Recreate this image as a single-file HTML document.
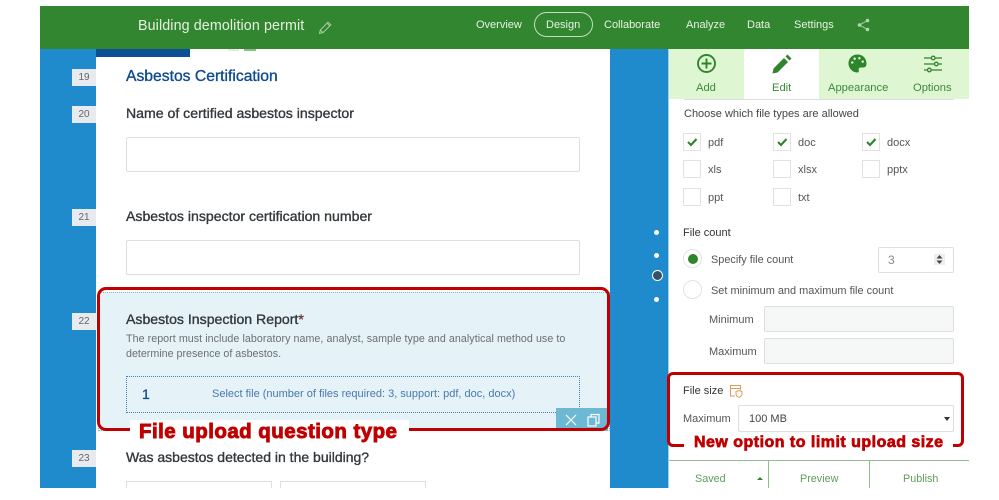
<!DOCTYPE html>
<html><head><meta charset="utf-8"><style>
html,body{margin:0;padding:0;background:#fff;width:999px;height:500px;overflow:hidden}
body{font-family:"Liberation Sans",sans-serif;position:relative}
#w{position:absolute;left:0;top:0;width:999px;height:500px;filter:blur(.3px)}
.a{position:absolute}
.t{position:absolute;white-space:nowrap;line-height:1}
.n{position:absolute;left:72px;width:24px;height:17px;background:#e7eaee;color:#666;font-size:10px;line-height:17px;text-align:center}
.q{font-size:14.1px;color:#33383c;font-weight:400;-webkit-text-stroke:.35px #33383c}
.ib{position:absolute;background:#fff;border:1px solid #dedede;box-sizing:border-box;border-radius:2px}
.nav{color:#e8f2e4;font-size:11px}
.cb{position:absolute;width:18px;height:18px;border:1px solid #e2e2e2;box-sizing:border-box;background:#fff}
.l{color:#555;font-size:11px}
.tab{color:#3a8a3a;font-size:11.2px}
.red{color:#c00000;font-weight:700;-webkit-text-stroke:.9px #c00000}
</style></head><body><div id="w">
<div class="a" style="left:40px;top:49px;width:629px;height:439px;background:#1f8bcd"></div>
<div class="a" style="left:96px;top:49px;width:514px;height:439px;background:#fff"></div>
<div class="a" style="left:96px;top:49px;width:94px;height:8px;background:#0b4f95"></div>
<div class="a" style="left:228px;top:49px;width:11px;height:2px;background:#e8e8e8"></div>
<div class="a" style="left:244px;top:49px;width:12px;height:2px;background:#8dbb8d"></div>
<div class="a" style="left:40px;top:6px;width:929px;height:43px;background:#31862f"></div>

<div class="t" style="left:138px;top:19px;font-size:14.3px;color:#e6f1e2;letter-spacing:.1px">Building demolition permit</div>
<svg class="a" style="left:318px;top:20px" width="14" height="15" viewBox="0 0 14 15" fill="none" stroke="#a9cda6" stroke-width="1"><path d="M1.500 13.500l.8-3.500L10 2.200l2.800 2.700-7.700 7.700zM2.300 10l3 3M9 3.200l2.800 2.700"/></svg>
<div class="t nav" style="left:476px;top:20px">Overview</div>
<div class="a" style="left:534px;top:12px;width:59px;height:25px;border:1px solid #c5dcc2;border-radius:13px;box-sizing:border-box"></div>
<div class="t nav" style="left:546px;top:20px">Design</div>
<div class="t nav" style="left:604px;top:20px">Collaborate</div>
<div class="t nav" style="left:686px;top:20px">Analyze</div>
<div class="t nav" style="left:747px;top:20px">Data</div>
<div class="t nav" style="left:794px;top:20px">Settings</div>
<svg class="a" style="left:857px;top:18px" width="13" height="14" viewBox="0 0 13 14" fill="#b5d4b2" stroke="#b5d4b2"><path d="M10.500 2.500L2.500 7l8 4.500" fill="none"/><circle cx="10.500" cy="2.500" r="1.300"/><circle cx="2.500" cy="7" r="1.300"/><circle cx="10.500" cy="11.500" r="1.300"/></svg>

<div class="n" style="top:69px">19</div>
<div class="n" style="top:106px">20</div>
<div class="n" style="top:209px">21</div>
<div class="n" style="top:313px">22</div>
<div class="n" style="top:450px">23</div>

<div class="t" style="left:126px;top:69px;font-size:15.7px;color:#0e4a8f;-webkit-text-stroke:.35px #0e4a8f">Asbestos Certification</div>
<div class="t q" style="left:126px;top:106px">Name of certified asbestos inspector</div>
<div class="ib" style="left:126px;top:137px;width:454px;height:35px"></div>
<div class="t q" style="left:126px;top:209px">Asbestos inspector certification number</div>
<div class="ib" style="left:126px;top:240px;width:454px;height:35px"></div>

<div class="a" style="left:98px;top:292px;width:512px;height:139px;background:#e5f3f8;border:1px dotted #7fbcd6;box-sizing:border-box"></div>
<div class="t q" style="left:126px;top:312px">Asbestos Inspection Report<span style="color:#c0392b">*</span></div>
<div class="t" style="left:126px;top:334px;font-size:10.7px;color:#6b6f72;letter-spacing:.05px">The report must include laboratory name, analyst, sample type and analytical method use to</div>
<div class="t" style="left:126px;top:349px;font-size:10.7px;color:#6b6f72">determine presence of asbestos.</div>
<div class="a" style="left:126px;top:376px;width:454px;height:37px;border:1px dotted #4a7fb5;box-sizing:border-box"></div>
<div class="t" style="left:142px;top:387px;font-size:14px;color:#0e4a8f;-webkit-text-stroke:.3px #0e4a8f">1</div>
<div class="t" style="left:212px;top:389px;font-size:11px;color:#4a78ad">Select file (number of files required: 3, support: pdf, doc, docx)</div>
<div class="a" style="left:556px;top:408px;width:52px;height:23px;background:#6db8d2"></div>
<svg class="a" style="left:564px;top:413px" width="40" height="14" viewBox="0 0 40 14" fill="none" stroke="#fff" stroke-width="1.200"><path d="M2 2l10 10M12 2L2 12"/><rect x="24" y="4" width="8" height="9"/><path d="M27 4V1.500h8V10h-3"/></svg>

<div class="a" style="left:97px;top:287px;width:513px;height:144px;border:3px solid #c00000;border-radius:9px;box-sizing:border-box"></div>
<div class="a" style="left:130px;top:420px;width:279px;height:24px;background:#fff"></div>
<div class="t red" style="left:139px;top:422px;font-size:20.5px;letter-spacing:.45px">File upload question type</div>

<div class="t q" style="left:126px;top:450px;font-size:14px">Was asbestos detected in the building?</div>
<div class="a" style="left:126px;top:481px;width:146px;height:7px;border:1px solid #dedede;border-bottom:0;box-sizing:border-box"></div>
<div class="a" style="left:280px;top:481px;width:146px;height:7px;border:1px solid #dedede;border-bottom:0;box-sizing:border-box"></div>

<div class="a" style="left:654px;top:230px;width:5px;height:5px;background:#fff;border-radius:50%"></div>
<div class="a" style="left:654px;top:253px;width:5px;height:5px;background:#fff;border-radius:50%"></div>
<div class="a" style="left:652px;top:270px;width:9px;height:9px;background:#34506a;border:1px solid #fff;border-radius:50%"></div>
<div class="a" style="left:654px;top:297px;width:5px;height:5px;background:#fff;border-radius:50%"></div>

<!-- right panel -->
<div class="a" style="left:668px;top:49px;width:301px;height:439px;background:#fff;border-left:1px solid #9ccfea;box-sizing:border-box"></div>
<div class="a" style="left:669px;top:49px;width:75px;height:50px;background:#dff6d2"></div>
<div class="a" style="left:819px;top:49px;width:150px;height:50px;background:#dff6d2"></div>
<div class="a" style="left:684px;top:99px;width:270px;height:1px;background:#ddd"></div>
<svg class="a" style="left:696px;top:53px" width="21" height="21" viewBox="0 0 21 21" fill="none" stroke="#2e852c" stroke-width="1.900"><circle cx="10.500" cy="10.500" r="8.500"/><path d="M10.500 5.500v10M5.500 10.500h10"/></svg>
<svg class="a" style="left:772px;top:54px" width="20" height="20" viewBox="0 0 20 20" fill="#2e852c"><path d="M.5 19.500l1-5L12 4l4 4L5.500 18.500zM13.500 2.500l2-2 4 4-2 2z"/></svg>
<svg class="a" style="left:848px;top:54px" width="19" height="19" viewBox="0 0 20 20"><path fill="#2e852c" d="M10 .5C4.500.5.500 4.500.500 9.800s4.300 9.700 9 9.700c1.700 0 2.300-1 1.900-2.300-.6-1.700.3-3 2.100-3h2.700c2 0 3.300-1.500 3.300-4.200C19.500 4.500 15.300.5 10 .5z"/><g fill="#dff6d2"><circle cx="4.500" cy="9" r="1.300"/><circle cx="7" cy="5" r="1.300"/><circle cx="12" cy="4.500" r="1.300"/><circle cx="15.500" cy="8" r="1.300"/></g></svg>
<svg class="a" style="left:923px;top:54px" width="20" height="20" viewBox="0 0 20 20" fill="none" stroke="#2e852c" stroke-width="1.300"><path d="M1 4h7.500M12 4h7M1 10h10.500M15 10h4M1 16h3.500M8 16h11"/><circle cx="10.200" cy="4" r="1.800"/><circle cx="13.300" cy="10" r="1.800"/><circle cx="6.300" cy="16" r="1.800"/></svg>
<div class="t tab" style="left:696px;top:83px">Add</div>
<div class="t tab" style="left:772px;top:83px">Edit</div>
<div class="t tab" style="left:828px;top:83px">Appearance</div>
<div class="t tab" style="left:913px;top:83px">Options</div>

<div class="t" style="left:684px;top:109px;font-size:11px;color:#444">Choose which file types are allowed</div>
<div class="cb" style="left:683px;top:133px"></div><div class="cb" style="left:773px;top:133px"></div><div class="cb" style="left:862px;top:133px"></div>
<div class="cb" style="left:683px;top:160px"></div><div class="cb" style="left:773px;top:160px"></div><div class="cb" style="left:862px;top:160px"></div>
<div class="cb" style="left:683px;top:188px"></div><div class="cb" style="left:773px;top:188px"></div>
<svg class="a" style="left:683px;top:133px" width="18" height="18" viewBox="0 0 18 18" fill="none" stroke="#2e852c" stroke-width="2.100"><path d="M5 9l3 3 5.500-6"/></svg>
<svg class="a" style="left:773px;top:133px" width="18" height="18" viewBox="0 0 18 18" fill="none" stroke="#2e852c" stroke-width="2.100"><path d="M5 9l3 3 5.500-6"/></svg>
<svg class="a" style="left:862px;top:133px" width="18" height="18" viewBox="0 0 18 18" fill="none" stroke="#2e852c" stroke-width="2.100"><path d="M5 9l3 3 5.500-6"/></svg>
<div class="t l" style="left:708px;top:138px">pdf</div><div class="t l" style="left:798px;top:138px">doc</div><div class="t l" style="left:887px;top:138px">docx</div>
<div class="t l" style="left:708px;top:165px">xls</div><div class="t l" style="left:798px;top:165px">xlsx</div><div class="t l" style="left:887px;top:165px">pptx</div>
<div class="t l" style="left:708px;top:193px">ppt</div><div class="t l" style="left:798px;top:193px">txt</div>

<div class="t" style="left:683px;top:228px;font-size:11px;color:#333">File count</div>
<div class="a" style="left:683px;top:249px;width:19px;height:19px;border:1px solid #e2e2e2;border-radius:50%;box-sizing:border-box;background:#fff"></div>
<div class="a" style="left:688px;top:254px;width:10px;height:10px;background:#2e852c;border-radius:50%"></div>
<div class="t l" style="left:711px;top:255px;font-size:10.9px">Specify file count</div>
<div class="ib" style="left:878px;top:247px;width:76px;height:26px"></div>
<div class="t" style="left:888px;top:254px;font-size:12px;color:#888">3</div>
<div class="a" style="left:934px;top:254px;width:11px;height:11px;background:#eee"></div>
<svg class="a" style="left:935px;top:254px" width="9" height="11" viewBox="0 0 9 11" fill="#444"><path d="M4.500 1l3 3.500h-6zM4.500 10l3-3.500h-6z"/></svg>
<div class="a" style="left:683px;top:280px;width:19px;height:19px;border:1px solid #e2e2e2;border-radius:50%;box-sizing:border-box;background:#fff"></div>
<div class="t l" style="left:711px;top:286px;font-size:10.95px">Set minimum and maximum file count</div>
<div class="t l" style="left:709px;top:315px">Minimum</div>
<div class="t l" style="left:709px;top:347px">Maximum</div>
<div class="ib" style="left:764px;top:306px;width:190px;height:26px;background:#f6f7f7"></div>
<div class="ib" style="left:764px;top:338px;width:190px;height:26px;background:#f6f7f7"></div>

<div class="t" style="left:683px;top:386px;font-size:11px;color:#333">File size</div>
<svg class="a" style="left:729px;top:384px" width="14" height="14" viewBox="0 0 14 14" fill="none" stroke="#d8a05a" stroke-width="1"><path d="M6 12H1.500V1.500h10V6M1.500 4.500h10"/><path d="M7 7.500l3-1 3 1v2.500c0 1.500-1.500 2.800-3 3.300-1.500-.5-3-1.800-3-3.300z"/></svg>
<div class="t l" style="left:683px;top:414px">Maximum</div>
<div class="ib" style="left:738px;top:405px;width:216px;height:27px"></div>
<div class="t" style="left:749px;top:414px;font-size:11px;color:#444">100 MB</div>
<div class="a" style="left:944px;top:417px;border:3px solid transparent;border-top:4px solid #333;border-bottom:0"></div>

<div class="a" style="left:667px;top:372px;width:297px;height:75px;border:3px solid #c00000;border-radius:6px;box-sizing:border-box"></div>
<div class="a" style="left:684px;top:434px;width:269px;height:16px;background:#fff"></div>
<div class="t red" style="left:694px;top:435px;font-size:16px;letter-spacing:.48px;-webkit-text-stroke:.7px #c00000">New option to limit upload size</div>

<div class="a" style="left:669px;top:460px;width:300px;height:1px;background:#8fc08d"></div>
<div class="a" style="left:768px;top:460px;width:1px;height:28px;background:#8fc08d"></div>
<div class="a" style="left:869px;top:460px;width:1px;height:28px;background:#8fc08d"></div>
<div class="t" style="left:695px;top:474px;font-size:10.8px;color:#5f9c5d">Saved</div>
<div class="a" style="left:757px;top:477px;border:3px solid transparent;border-bottom:3px solid #2e852c;border-top:0"></div>
<div class="t" style="left:800px;top:474px;font-size:10.8px;color:#5f9c5d">Preview</div>
<div class="t" style="left:903px;top:474px;font-size:10.8px;color:#5f9c5d">Publish</div>
</div></body></html>
